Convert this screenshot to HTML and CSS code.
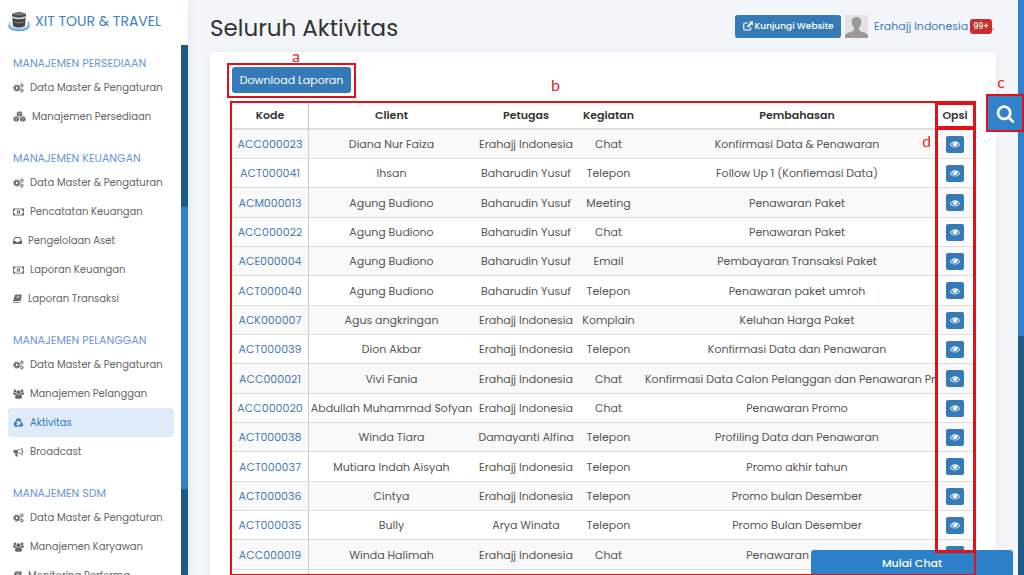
FILE: index.html
```html
<!DOCTYPE html>
<html lang="id">
<head>
<meta charset="utf-8">
<meta name="viewport" content="width=device-width, initial-scale=1">
<title>Seluruh Aktivitas</title>
<link rel="stylesheet" href="styles.css">
</head>
<body>
<svg class="sprite" aria-hidden="true">
  <symbol id="search" viewBox="0 0 1792 1792"><path d="M1216 832q0-185-131.5-316.5t-316.5-131.5-316.5 131.5-131.5 316.5 131.5 316.5 316.5 131.5 316.5-131.5 131.5-316.5zm512 832q0 52-38 90t-90 38q-54 0-90-38l-343-342q-179 124-399 124-143 0-273.5-55.5t-225-150-150-225-55.5-273.5 55.5-273.5 150-225 225-150 273.5-55.5 273.5 55.5 225 150 150 225 55.5 273.5q0 220-124 399l343 343q37 37 37 90z"/></symbol>
  <symbol id="eye" viewBox="0 0 1792 1792"><path d="M1664 960q-152-236-381-353 61 104 61 225 0 185-131.5 316.5t-316.5 131.5-316.5-131.5-131.5-316.5q0-121 61-225-229 117-381 353 133 205 333.500 326.500t434.500 121.500 434.500-121.500 333.500-326.500zm-720-384q0-20-14-34t-34-14q-125 0-214.500 89.500t-89.500 214.500q0 20 14 34t34 14 34-14 14-34q0-86 61-147t147-61q20 0 34-14t14-34zm848 384q0 34-20 69-140 230-376.500 368.500t-499.500 138.500-499.500-139-376.500-368q-20-35-20-69t20-69q140-229 376.500-368t499.500-139 499.500 139 376.500 368q20 35 20 69z"/></symbol>
  <symbol id="cogs" viewBox="0 0 22 20"><g fill="none" stroke="currentColor"><circle cx="7.500" cy="10" r="4" stroke-width="3.400"/><circle cx="7.500" cy="10" r="6.300" stroke-width="2" stroke-dasharray="2.700 2.248"/><circle cx="17.500" cy="5" r="2.100" stroke-width="1.900"/><circle cx="17.500" cy="5" r="3.500" stroke-width="1.300" stroke-dasharray="1.600 1.149"/><circle cx="17.500" cy="15" r="2.100" stroke-width="1.900"/><circle cx="17.500" cy="15" r="3.500" stroke-width="1.300" stroke-dasharray="1.600 1.149"/></g></symbol>
  <symbol id="cubes" viewBox="0 0 24 20"><path d="M12 .5l5 2v5.800l-5 2.200-5-2.200V2.500zM6 9.500l5 2v5.800l-5 2.200-5-2.200v-5.800zM18 9.500l5 2v5.800l-5 2.200-5-2.200v-5.800z"/><path d="M8 3.200l4 1.600 4-1.600M12 4.800v4.500M2 12.200l4 1.600 4-1.600M6 13.800v4.500M14 12.200l4 1.600 4-1.600M18 13.800v4.500" fill="none" stroke="#fff" stroke-width=".8"/></symbol>
  <symbol id="money" viewBox="0 0 22 18"><path fill-rule="evenodd" d="M0 2h22v14H0zM4.500 3.600a3 3 0 0 1-3 3v4.800a3 3 0 0 1 3 3h13a3 3 0 0 1 3-3V6.600a3 3 0 0 1-3-3z"/><path fill-rule="evenodd" d="M11 4.500c2.400 0 3.500 2.200 3.500 4.500s-1.100 4.500-3.500 4.500S7.500 11.300 7.500 9 8.600 4.500 11 4.500zM10.500 6L9 7.200l.6.8.7-.4V11H9v1h4v-1h-1.300V6z"/></symbol>
  <symbol id="inbox" viewBox="0 0 18 18"><path fill-rule="evenodd" d="M4 2h10q.8 0 1.200.8L18 10v5q0 1-1 1H1q-1 0-1-1v-5l2.800-7.200Q3.200 2 4 2zm.4 2L2.200 10h3.600l1.300 2.500h3.800l1.300-2.500h3.600L13.600 4z"/></symbol>
  <symbol id="book" viewBox="0 0 20 20"><path d="M7 1h11q1.700.2 1.200 2L16 14q-.5 1.500-2 1.500H4q-1.500 0-1.500 1t1.500 1h11L18.500 6q1 .6.600 2L16 18q-.4 1.500-2 1.500H3.500Q0 19 .5 15L4 3.500Q4.700 1 7 1z"/><path d="M8 5h7M7 8h7" stroke="#fff" stroke-width="1.200"/></symbol>
  <symbol id="users" viewBox="0 0 22 20"><circle cx="11" cy="6.500" r="4"/><circle cx="4" cy="3.800" r="2.800"/><circle cx="18" cy="3.800" r="2.800"/><path d="M7.500 10.200q3.500 2.500 7 0 3.500.6 3.500 6 0 3.300-3 3.300H7q-3 0-3-3.300 0-5.400 3.500-6zM2 6.500q2 1.500 4.200.5-.1 2 1 3.200-2 0-3 1.300H2q-2 0-2-2 0-3 2-3zM20 6.500q-2 1.500-4.200.5.1 2-1 3.200 2 0 3 1.300H20q2 0 2-2 0-3-2-3z"/></symbol>
  <symbol id="recycle" viewBox="0 0 20 20"><path d="M6 2q.6-1 2-1h5l1.500 2.500L16 2.700 14 7.600 9 7l1.500-1-1.300-2.300L6.700 8 3.500 6.200zM16.300 7.500l2.900 4.800q.7 1.200-.2 2.500L17.600 17H13v2l-3-4.200 3-4.100v2.300h3l-2.600-3.900zM.8 8.200l4.900-.5 2.200 4.700-1.700-.9L4.700 14h4v3.600H4.500q-1.300 0-2-1.200L.7 13.500q-.5-1 .1-2l1-1.900z"/></symbol>
  <symbol id="horn" viewBox="0 0 20 20"><path fill-rule="evenodd" d="M18 1v6q1.500.5 1.500 2T18 11v6q-4.500-4.500-10-5-1.500 1-.4 2.500-.7 1.300.8 2.400l1 1q-2 2-5 .6-1.700-4-.9-6.500H2q-2 0-2-2V8q0-2 2-2h5q6 0 11-5zm-1.500 3.200Q13 7 8.500 7.400v3.200q4.500.4 8 3.200z"/></symbol>
  <symbol id="external" viewBox="0 0 20 20"><path d="M10 4H3.500Q1.500 4 1.500 6v10q0 2 2 2h10q2 0 2-2v-4" fill="none" stroke="currentColor" stroke-width="2.200"/><path d="M12 1h8v8l-2.700-2.700-7 7-2.600-2.600 7-7z"/></symbol>
</svg>

<div class="app">
  <aside class="sidebar">
    <a class="brand" href="#">
      <svg class="brand-logo" viewBox="0 0 22 22" aria-hidden="true">
        <path d="M0 15q-.5 5.500 11 5.500T22 15q0-4-2-5l-1 6q-8 4-16 0l-1-5z" fill="#9ccbf0"/>
        <path d="M4 4l7-2 7 2-1 12q-6 3-12 0z" fill="#464343"/>
        <path d="M4 4q7-4 14 0-7 3-14 0z" fill="#777"/>
        <path d="M4.200 7q7 3 13.600 0" fill="none" stroke="#ddd" stroke-width="1.500"/>
        <path d="M6 12q5 2 10 0" fill="none" stroke="#888"/>
        <path d="M1 16q1 4.500 10 4.500T21 16" fill="none" stroke="#3e91d1" stroke-width="1"/>
      </svg>
      <span>XIT TOUR &amp; TRAVEL</span>
    </a>
    <div class="sidebar-body">
      <nav class="menu">
        <section><h2>MANAJEMEN PERSEDIAAN</h2>
          <a href="#"><svg><use href="#cogs"/></svg>Data Master &amp; Pengaturan</a>
          <a href="#"><svg class="wide"><use href="#cubes"/></svg>Manajemen Persediaan</a>
        </section>
        <section><h2>MANAJEMEN KEUANGAN</h2>
          <a href="#"><svg><use href="#cogs"/></svg>Data Master &amp; Pengaturan</a>
          <a href="#"><svg><use href="#money"/></svg>Pencatatan Keuangan</a>
          <a href="#"><svg class="narrow"><use href="#inbox"/></svg>Pengelolaan Aset</a>
          <a href="#"><svg><use href="#money"/></svg>Laporan Keuangan</a>
          <a href="#"><svg class="narrow"><use href="#book"/></svg>Laporan Transaksi</a>
        </section>
        <section><h2>MANAJEMEN PELANGGAN</h2>
          <a href="#"><svg><use href="#cogs"/></svg>Data Master &amp; Pengaturan</a>
          <a href="#"><svg><use href="#users"/></svg>Manajemen Pelanggan</a>
          <a href="#" class="active"><svg><use href="#recycle"/></svg>Aktivitas</a>
          <a href="#"><svg><use href="#horn"/></svg>Broadcast</a>
        </section>
        <section><h2>MANAJEMEN SDM</h2>
          <a href="#"><svg><use href="#cogs"/></svg>Data Master &amp; Pengaturan</a>
          <a href="#"><svg><use href="#users"/></svg>Manajemen Karyawan</a>
          <a href="#"><svg class="narrow"><use href="#book"/></svg>Monitoring Performa</a>
        </section>
      </nav>
      <div class="track side-track"><div class="thumb"></div></div>
    </div>
  </aside>

  <main class="content">
    <header class="topbar">
      <h1>Seluruh Aktivitas</h1>
      <div class="account">
        <button class="btn visit" type="button"><svg><use href="#external"/></svg>Kunjungi Website</button>
        <svg class="avatar" viewBox="0 0 23 23" aria-hidden="true"><path fill="#e2e2e2" d="M0 0h23v23H0z"/><path fill="#999" d="M11.500 2c3.500 0 5 2.300 4.700 5.500-.2 2.700-1.200 4.300-2.200 5.500v2.200c1 1.600 7.500 2.300 9 4.800v3H0v-3c1.500-2.500 8-3.200 9-4.800V13C8 11.800 7 10.200 6.800 7.500 6.500 4.300 8 2 11.500 2z"/></svg>
        <a class="user" href="#">Erahajj Indonesia</a><span class="badge">99+</span><span class="dot">.</span>
      </div>
    </header>

    <div class="card">
      <div class="toolbar">
        <button class="btn download" type="button">Download Laporan</button>
        <div class="mark mark-a"><span>a</span></div>
      </div>
      <div class="table-area">
        <div class="table-clip">
          <table>
            <colgroup><col class="c-kode"><col class="c-client"><col class="c-petugas"><col class="c-kegiatan"><col><col class="c-opsi"></colgroup>
            <thead><tr><th>Kode</th><th>Client</th><th>Petugas</th><th>Kegiatan</th><th>Pembahasan</th><th>Opsi</th></tr></thead>
            <tbody>
              <tr><td><a href="#">ACC000023</a></td><td>Diana Nur Faiza</td><td>Erahajj Indonesia</td><td>Chat</td><td>Konfirmasi Data &amp; Penawaran</td><td><button class="view" type="button" aria-label="Lihat"><svg><use href="#eye"/></svg></button></td></tr>
              <tr><td><a href="#">ACT000041</a></td><td>Ihsan</td><td>Baharudin Yusuf</td><td>Telepon</td><td>Follow Up 1 (Konfiemasi Data)</td><td><button class="view" type="button" aria-label="Lihat"><svg><use href="#eye"/></svg></button></td></tr>
              <tr><td><a href="#">ACM000013</a></td><td>Agung Budiono</td><td>Baharudin Yusuf</td><td>Meeting</td><td>Penawaran Paket</td><td><button class="view" type="button" aria-label="Lihat"><svg><use href="#eye"/></svg></button></td></tr>
              <tr><td><a href="#">ACC000022</a></td><td>Agung Budiono</td><td>Baharudin Yusuf</td><td>Chat</td><td>Penawaran Paket</td><td><button class="view" type="button" aria-label="Lihat"><svg><use href="#eye"/></svg></button></td></tr>
              <tr><td><a href="#">ACE000004</a></td><td>Agung Budiono</td><td>Baharudin Yusuf</td><td>Email</td><td>Pembayaran Transaksi Paket</td><td><button class="view" type="button" aria-label="Lihat"><svg><use href="#eye"/></svg></button></td></tr>
              <tr><td><a href="#">ACT000040</a></td><td>Agung Budiono</td><td>Baharudin Yusuf</td><td>Telepon</td><td>Penawaran paket umroh</td><td><button class="view" type="button" aria-label="Lihat"><svg><use href="#eye"/></svg></button></td></tr>
              <tr><td><a href="#">ACK000007</a></td><td>Agus angkringan</td><td>Erahajj Indonesia</td><td>Komplain</td><td>Keluhan Harga Paket</td><td><button class="view" type="button" aria-label="Lihat"><svg><use href="#eye"/></svg></button></td></tr>
              <tr><td><a href="#">ACT000039</a></td><td>Dion Akbar</td><td>Erahajj Indonesia</td><td>Telepon</td><td>Konfirmasi Data dan Penawaran</td><td><button class="view" type="button" aria-label="Lihat"><svg><use href="#eye"/></svg></button></td></tr>
              <tr><td><a href="#">ACC000021</a></td><td>Vivi Fania</td><td>Erahajj Indonesia</td><td>Chat</td><td>Konfirmasi Data Calon Pelanggan dan Penawaran Produk</td><td><button class="view" type="button" aria-label="Lihat"><svg><use href="#eye"/></svg></button></td></tr>
              <tr><td><a href="#">ACC000020</a></td><td>Abdullah Muhammad Sofyan</td><td>Erahajj Indonesia</td><td>Chat</td><td>Penawaran Promo</td><td><button class="view" type="button" aria-label="Lihat"><svg><use href="#eye"/></svg></button></td></tr>
              <tr><td><a href="#">ACT000038</a></td><td>Winda Tiara</td><td>Damayanti Alfina</td><td>Telepon</td><td>Profiling Data dan Penawaran</td><td><button class="view" type="button" aria-label="Lihat"><svg><use href="#eye"/></svg></button></td></tr>
              <tr><td><a href="#">ACT000037</a></td><td>Mutiara Indah Aisyah</td><td>Erahajj Indonesia</td><td>Telepon</td><td>Promo akhir tahun</td><td><button class="view" type="button" aria-label="Lihat"><svg><use href="#eye"/></svg></button></td></tr>
              <tr><td><a href="#">ACT000036</a></td><td>Cintya</td><td>Erahajj Indonesia</td><td>Telepon</td><td>Promo bulan Desember</td><td><button class="view" type="button" aria-label="Lihat"><svg><use href="#eye"/></svg></button></td></tr>
              <tr><td><a href="#">ACT000035</a></td><td>Bully</td><td>Arya Winata</td><td>Telepon</td><td>Promo Bulan Desember</td><td><button class="view" type="button" aria-label="Lihat"><svg><use href="#eye"/></svg></button></td></tr>
              <tr><td><a href="#">ACC000019</a></td><td>Winda Halimah</td><td>Erahajj Indonesia</td><td>Chat</td><td>Penawaran Promo</td><td><button class="view" type="button" aria-label="Lihat"><svg><use href="#eye"/></svg></button></td></tr>
              <tr><td></td><td></td><td></td><td></td><td></td><td></td></tr>
            </tbody>
          </table>
        </div>
        <div class="mark mark-b"><span>b</span></div>
        <div class="mark mark-head"></div>
        <div class="mark mark-d"><span>d</span></div>
      </div>
    </div>
  </main>
  <div class="track page-track"><div class="thumb"></div></div>
  <button class="search" type="button" aria-label="Cari"><svg><use href="#search"/></svg></button>
  <span class="letter-c">c</span>
  <button class="chat" type="button">Mulai Chat</button>
</div>
</body>
</html>
```
FILE: styles.css
```css
* { box-sizing: border-box; }
body { margin: 0; font-family: Poppins, Inter, sans-serif; font-size: 11px; line-height: 20px; color: #555; background: #f2f6fa; }
button { font: inherit; border: 0; padding: 0; cursor: pointer; }
a { color: #4779b4; text-decoration: none; }
svg { fill: currentColor; flex: none; }
h1, h2 { margin: 0; font-weight: 400; }
.sprite { position: absolute; width: 0; height: 0; }

.app { position: relative; display: flex; height: 100vh; overflow: hidden; }

.sidebar { display: flex; flex-direction: column; width: 188px; flex: none; background: #fff; box-shadow: 0 0 12px #dfe6ed; }
.brand { display: flex; align-items: center; gap: 5px; height: 45px; padding: 0 0 3px 8px; flex: none; font-size: 14px; color: #3b82c0; white-space: nowrap; }
.brand-logo { width: 22px; height: 22px; }
.sidebar-body { display: flex; flex: 1; min-height: 0; }
.menu { display: flex; flex-direction: column; gap: 17px; flex: 1; min-width: 0; padding: 8px 7px 0 8px; overflow: hidden; }
.menu section { flex: none; }
.menu h2 { padding-left: 5px; font-size: 11px; line-height: 20px; color: #6e95d9; white-space: nowrap; }
.menu a { display: flex; align-items: center; gap: 6px; height: 29px; padding-left: 5px; border-radius: 4px; font-size: 10px; color: #666; white-space: nowrap; }
.menu svg { width: 11px; height: 10px; }
.menu .wide { width: 13px; height: 11px; }
.menu .narrow { width: 9px; height: 9px; }
.menu .active { background: #dfebf9; color: #3479b8; }

.track { width: 7px; flex: none; background: #1d5a84; }
.thumb { background: #3182ca; }
.side-track { padding-top: 162px; }
.side-track .thumb { height: 282px; }
.page-track { width: 6px; }
.page-track .thumb { height: 336px; }

.content { display: flex; flex-direction: column; flex: 1; min-width: 0; padding: 0 22px; }
.topbar { display: flex; align-items: center; justify-content: space-between; height: 52px; flex: none; }
h1 { font-size: 23px; line-height: 36px; color: #333; padding-top: 3px; }
.account { display: flex; align-items: center; padding-right: 4px; font-size: 11px; }
.btn { background: #337ab7; color: #fff; border-radius: 3px; white-space: nowrap; }
.visit { display: flex; align-items: center; justify-content: center; gap: 2px; width: 106px; height: 23px; font-size: 9px; font-weight: 500; }
.visit svg { width: 10px; height: 10px; }
.avatar { width: 23px; height: 23px; margin: 0 6px 0 4px; }
.badge { margin-left: 2px; padding: 0 3px; border-radius: 3px; background: #c9302c; color: #fff; font-size: 8px; font-weight: 500; line-height: 15px; }
.dot { width: 0; }

.card { flex: 1; padding: 15px 22px 0; background: #fff; border-radius: 4px 4px 0 0; box-shadow: 0 0 8px #e6ecf2; }
.toolbar { position: relative; display: flex; height: 36px; }
.download { width: 119px; height: 26px; }
.table-area { position: relative; }
.table-clip { overflow: hidden; }
table { width: calc(100% + 19px); table-layout: fixed; border-collapse: separate; border-spacing: 0; }
.c-kode { width: 77px; }
.c-client { width: 165px; }
.c-petugas { width: 104px; }
.c-kegiatan { width: 61px; }
.c-opsi { width: 38px; }
th, td { height: 29px; padding: 0; text-align: center; white-space: nowrap; line-height: 20px; border-bottom: 1px solid #ddd; }
th { height: 27px; padding-bottom: 2px; color: #333; font-weight: 600; border-bottom: 2px solid #ddd; }
tbody tr:nth-child(3n) td { height: 30px; }
th:first-child, td:first-child { border-right: 1px solid #ccc; }
th:nth-child(5), td:nth-child(5) { padding-left: 6px; padding-right: 6px; }
tr > :last-child { position: sticky; right: 0; background: #fff; }
tbody tr:nth-child(odd) td { background: #f9f9f9; }
.view { display: block; width: 18px; height: 17px; margin: 0 auto; border-radius: 2px; background: #337ab7; color: #fff; }
.view svg { display: block; width: 10px; height: 10px; margin: 0 auto; }

.mark { position: absolute; border: 2px solid #e3101a; pointer-events: none; z-index: 3; }
.mark span, .letter-c { position: absolute; color: #e3262c; font-family: Lato, sans-serif; font-size: 16px; line-height: 16px; }
.mark-a { left: -5px; top: -4px; width: 129px; height: 35px; }
.mark-a span { left: 63px; top: -17px; }
.mark-b { left: -2px; right: -2px; top: -2px; height: 475px; }
.mark-b span { left: 43%; top: -26px; }
.mark-head { right: -2px; top: -1px; width: 41px; height: 27px; border-width: 3px; }
.mark-d { right: -2px; top: 24px; width: 41px; height: 426px; border-width: 3px; }
.mark-d span { left: -16px; top: 3px; }

.search { position: absolute; right: 0; top: 94px; display: flex; align-items: center; justify-content: center; width: 38px; height: 38px; border: 2px solid #e3101a; background: #3182ca; color: #fff; z-index: 4; }
.search svg { width: 19px; height: 19px; }
.letter-c { right: 19px; top: 74px; }
.chat { position: absolute; right: 11px; bottom: 0; width: 202px; height: 25px; border-radius: 3px 3px 0 0; background: #2c80c7; color: #fff; font-weight: 500; z-index: 2; }
```
